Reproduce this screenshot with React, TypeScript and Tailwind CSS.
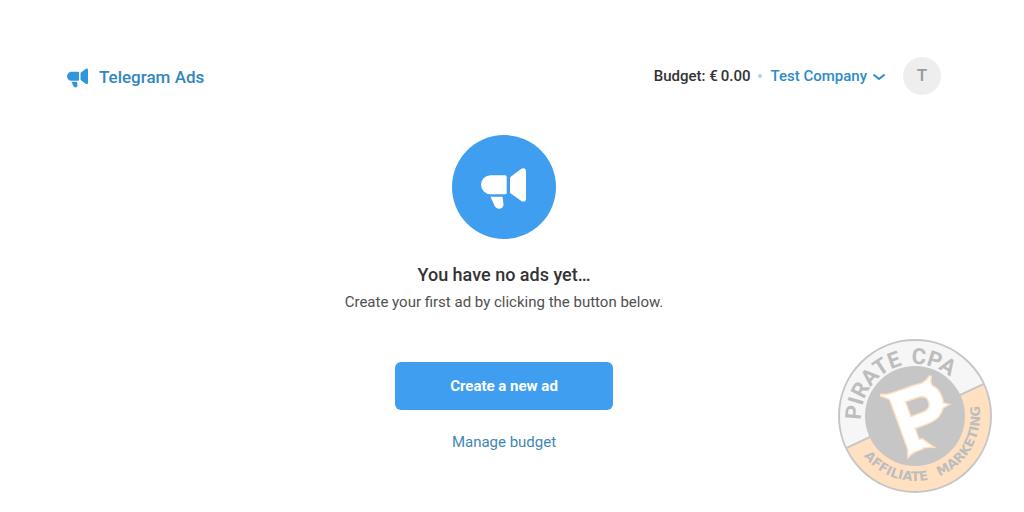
import React from "react";

const MegaphoneIcon: React.FC<{ className?: string }> = ({ className }) => (
  <svg className={className} viewBox="0 0 45 41" fill="currentColor" aria-hidden="true">
    <path d="M9.500 7.300H24.200a1.500 1.500 0 0 1 1.500 1.500v16a1.500 1.500 0 0 1-1.500 1.500H9.500a9.500 9.500 0 0 1 0-19z" />
    <path d="M29 10.500Q29 9.500 29.800 8.800L40 1C42.500-.8 45 .4 45 3v27.700c0 2.800-2.500 3.800-5 2L29.800 25.500Q29 25 29 24z" />
    <path d="M9.500 28.800H21.500l1 7.200c.5 5-6.500 6.500-8.700 2.300z" />
  </svg>
);

// letter with the thorny serifs around it, outline adds a rim of that width
const BadgeLetter: React.FC<{ color: string; outline: number }> = ({ color, outline }) => (
  <g fill={color} stroke={color}>
    <text fontFamily="Liberation Sans, sans-serif" fontSize="82" strokeWidth={outline + 5}>
      P
    </text>
    <g strokeWidth={outline}>
      <path d="M2 5 6-6H20L27 4Q20 1 14 2 8 2 2 5z" />
      <path d="M-4-62Q4-58 16-59V-52H6Q3-57-4-62z" />
      <path d="M32-58Q42-57 50-63 46-56 48-49L40-52z" />
      <path d="M49-37Q51-33 56-30 48-29 43-25L42-32z" />
    </g>
  </g>
);

const PirateBadge: React.FC = () => (
  <svg className="h-full w-full" viewBox="0 0 156 156" role="img" aria-label="Pirate CPA">
    <defs>
      <path id="arc-top" d="M24 82 A54 54 0 0 1 132 78" />
      <path id="arc-bottom" d="M13 78 A65 65 0 0 0 143 78 A65 65 0 0 0 78 13" />
    </defs>
    <circle cx="78" cy="78" r="76" fill="#f6f6f6" />
    <path d="M9.100 110.100A76 76 0 0 0 146.900 45.900z" fill="#ffe1c1" />
    <path d="M9.100 110.100 146.900 45.900" stroke="#c6c6c6" strokeWidth="2" />
    <circle cx="78" cy="78" r="76" fill="none" stroke="#c6c6c6" strokeWidth="2" />
    <circle cx="78" cy="78" r="50" fill="#c6c6c6" />
    <g fill="#bdbdbd" fontWeight="700">
      <g fontFamily="Roboto, sans-serif" fontSize="22">
        <text>
          <textPath href="#arc-top" startOffset="0">PIRATE</textPath>
        </text>
        <text>
          <textPath href="#arc-top" startOffset="83">CPA</textPath>
        </text>
      </g>
      <g fontFamily="DejaVu Sans, sans-serif" fontSize="13">
        <text>
          <textPath href="#arc-bottom" startOffset="43">AFFILIATE</textPath>
        </text>
        <text>
          <textPath href="#arc-bottom" startOffset="127">MARKETING</textPath>
        </text>
      </g>
    </g>
    <g transform="translate(68 114) rotate(-20)">
      <BadgeLetter color="#ffe1c1" outline={3} />
      <BadgeLetter color="#ffffff" outline={0} />
    </g>
  </svg>
);

const App: React.FC = () => {
  return (
    <div className="relative min-h-screen bg-white pt-[57px] pr-[83px] pl-[67px] font-[Roboto,sans-serif] text-[#333]">
      <header className="flex items-center justify-between">
        <a href="#" className="flex items-center gap-[11px] pt-1 text-[17px] font-medium text-[#3286bd]">
          <MegaphoneIcon className="h-5 w-[21px] text-[#3197dc]" />
          Telegram Ads
        </a>
        <div className="flex items-center text-[15px] font-medium">
          <span>Budget: €&thinsp;0.00</span>
          <span className="mx-2 h-1 w-1 rounded-full bg-[#b5cede]" />
          <button type="button" className="flex items-center gap-1 text-[#2e8cc5]">
            Test Company
            <svg className="h-4 w-4" viewBox="0 0 16 16" fill="none" stroke="currentColor" strokeWidth="2" strokeLinecap="round" strokeLinejoin="round">
              <path d="M3 7 8 11 13 7" />
            </svg>
          </button>
          <div className="ml-4 flex h-[38px] w-[38px] items-center justify-center rounded-full bg-[#eeeeee] text-[17px] text-[#999]">
            T
          </div>
        </div>
      </header>

      <main className="flex flex-col items-center pt-10 text-center">
        <div className="flex h-[104px] w-[104px] items-center justify-center rounded-full bg-[#3f9eef] pt-0.5 pr-0.5 text-white">
          <MegaphoneIcon className="h-[41px] w-[45px]" />
        </div>
        <h1 className="mt-6 text-lg leading-6 font-medium">You have no ads yet…</h1>
        <p className="mt-[3px] text-[15px] leading-6 text-[#505050]">
          Create your first ad by clicking the button below.
        </p>
        <button
          type="button"
          className="mt-12 h-12 w-[218px] rounded-md bg-[#3f9eef] text-[15px] font-bold text-white"
        >
          Create a new ad
        </button>
        <a href="#" className="mt-5 text-[15px] leading-6 text-[#3f87b5]">
          Manage budget
        </a>
      </main>

      <div className="absolute right-[31px] bottom-[18px] h-[156px] w-[156px]">
        <PirateBadge />
      </div>
    </div>
  );
};

export default App;
